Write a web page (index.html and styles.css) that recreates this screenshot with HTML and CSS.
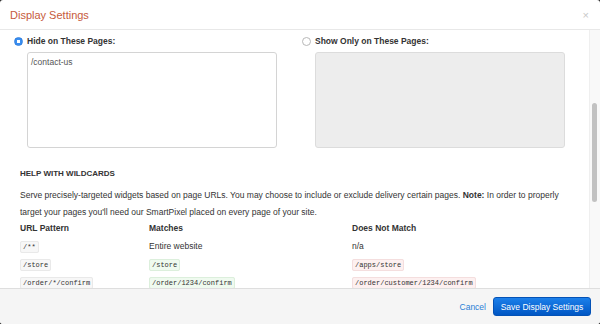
FILE: index.html
```html
<!DOCTYPE html>
<html lang="en">
<head>
    <meta charset="UTF-8">
    <title>Display Settings</title>
    <link rel="stylesheet" href="styles.css">
</head>
<body>
    <div class="modal">
        <header class="modal-header">
            <h1>Display Settings</h1>
            <span class="close">&times;</span>
        </header>

        <div class="modal-body">
            <div class="content">
                <div class="page-rules">
                    <div class="rule">
                        <label class="rule-label"><span class="radio checked"></span>Hide on These Pages:</label>
                        <div class="pages">/contact-us</div>
                    </div>
                    <div class="rule">
                        <label class="rule-label"><span class="radio"></span>Show Only on These Pages:</label>
                        <div class="pages disabled"></div>
                    </div>
                </div>

                <h2>Help with Wildcards</h2>
                <p class="help">Serve precisely-targeted widgets based on page URLs. You may choose to include or exclude delivery certain pages. <b>Note:</b> In order to properly<br>target your pages you'll need our SmartPixel placed on every page of your site.</p>

                <div class="wildcards">
                    <div class="th">URL Pattern</div>
                    <div class="th">Matches</div>
                    <div class="th">Does Not Match</div>

                    <div><code>/**</code></div>
                    <div>Entire website</div>
                    <div>n/a</div>

                    <div><code>/store</code></div>
                    <div><code class="ok">/store</code></div>
                    <div><code class="no">/apps/store</code></div>

                    <div><code>/order/*/confirm</code></div>
                    <div><code class="ok">/order/1234/confirm</code></div>
                    <div><code class="no">/order/customer/1234/confirm</code></div>
                </div>
            </div>
            <div class="scrollbar"><div class="thumb"></div></div>
        </div>

        <footer class="modal-footer">
            <a class="cancel" href="#">Cancel</a>
            <button class="save">Save Display Settings</button>
        </footer>
    </div>
</body>
</html>
```

FILE: styles.css
```css
body {
    margin: 0;
    background-color: #222;
    font-family: "Liberation Sans", Arial, sans-serif;
    font-size: 8.5px;
    color: #333;
}

.modal {
    width: 600px;
    height: 324px;
    background-color: white;
    border-radius: 3px;
    display: flex;
    flex-direction: column;
    overflow: hidden;
}

.modal-header {
    height: 29px;
    flex: none;
    border-bottom: 1px solid #e8e8e8;
    display: flex;
    justify-content: space-between;
    align-items: center;
    padding: 0 10px;
}

.modal-header h1 {
    margin: 0;
    font-size: 11px;
    font-weight: normal;
    color: #c65a3c;
}

.close {
    color: #c8c8c8;
    font-size: 11px;
    margin-right: 1px;
}

.modal-body {
    flex: 1;
    display: flex;
    min-height: 0;
}

.content {
    flex: 1;
    padding: 5px 26px 0 20px;
    overflow: hidden;
}

.scrollbar {
    width: 10px;
    background-color: #f9f9f9;
    border-left: 1px solid #efefef;
}

.thumb {
    width: 5px;
    height: 99px;
    margin: 73px 0 0 2px;
    border-radius: 3px;
    background-color: #c2c2c2;
}

.page-rules {
    display: grid;
    grid-template-columns: 275px 275px;
    gap: 13px;
    margin-left: -6px;
}

.rule-label {
    display: flex;
    align-items: center;
    gap: 4px;
    height: 12px;
    font-weight: bold;
    margin-bottom: 5px;
}

.radio {
    width: 7px;
    height: 7px;
    border-radius: 50%;
    border: 1px solid #b8b8b8;
    background-color: white;
    display: inline-block;
}

.radio.checked {
    border-color: #2f7fe0;
    background: radial-gradient(circle, white 0 1.5px, #3a8ef0 2px);
}

.pages {
    width: 242px;
    height: 88px;
    margin-left: 13px;
    border: 1px solid #d4d4d4;
    border-radius: 3px;
    padding: 3px;
    color: #555;
    line-height: 13px;
}

.pages.disabled {
    background-color: #ededed;
    border-color: #dcdcdc;
}

h2 {
    margin: 21px 0 8px;
    font-size: 8px;
    line-height: 10px;
    text-transform: uppercase;
}

.help {
    margin: 0;
    line-height: 17px;
}

.wildcards {
    display: grid;
    grid-template-columns: 129px 203px auto;
    grid-auto-rows: 18px;
    align-items: center;
    margin-top: -2px;
}

.th {
    font-weight: bold;
}

code {
    font-family: "Liberation Mono", "Courier New", monospace;
    font-size: 7px;
    padding: 1px 2px;
    background-color: #f7f7f7;
    border: 1px solid #e9e9e9;
    border-radius: 2px;
}

code.ok {
    background-color: #effaef;
    border-color: #dcefdc;
}

code.no {
    background-color: #fdf0f0;
    border-color: #f4dede;
}

.modal-footer {
    height: 35px;
    flex: none;
    border-top: 1px solid #dedede;
    background-color: #f5f5f5;
    display: flex;
    justify-content: flex-end;
    align-items: center;
    gap: 7px;
    padding-right: 9px;
}

.cancel {
    color: #2a7fd6;
    text-decoration: none;
}

.save {
    height: 19px;
    width: 98px;
    padding: 0;
    font-family: inherit;
    font-size: 8.5px;
    color: white;
    background: linear-gradient(#1c80ea, #0056c4);
    border: 1px solid #0452b6;
    border-radius: 3px;
    cursor: pointer;
}
```
